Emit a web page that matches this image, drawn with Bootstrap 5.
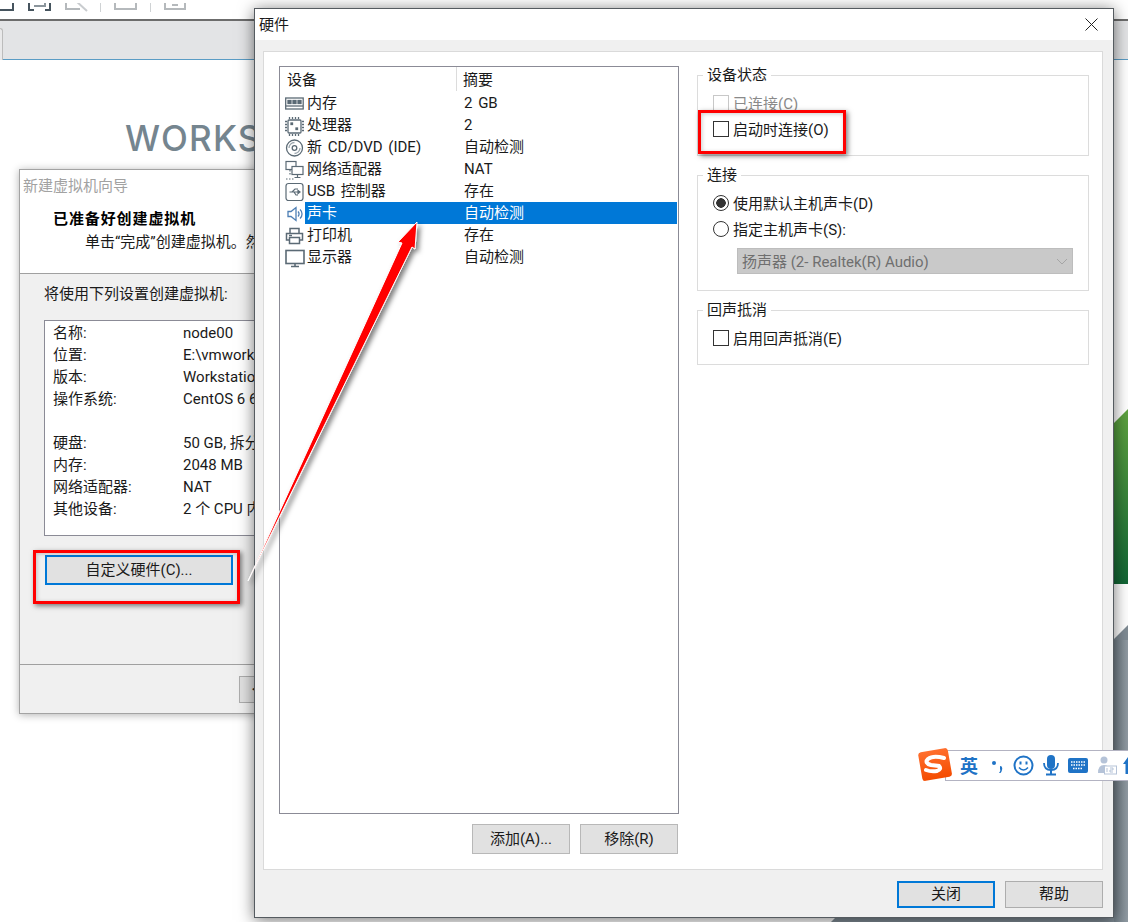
<!DOCTYPE html>
<html lang="zh-CN">
<head>
<meta charset="utf-8">
<title>硬件</title>
<link href="https://cdn.jsdelivr.net/npm/bootstrap@5.3.0/dist/css/bootstrap.min.css" rel="stylesheet">
<style>
html,body{margin:0;padding:0;background:#fff}
body{font-family:Roboto,"Noto Sans CJK SC",sans-serif;font-size:15px;color:#1a1a1a;line-height:22px}
.stage{position:relative;width:1128px;height:922px;overflow:hidden;background:#fff}
.deco{position:absolute;left:0;top:0}
.tool{height:19px}
.tool-sep{height:2px;background:#6c6c6c}
.tabs{height:39px;background:#e3e4e6;border-bottom:1px solid #5a9cc5;padding-top:7px}
.tab-edge{width:3px;height:32px;border:1px solid #bcbcbc;border-left:0;border-bottom:0;border-top-right-radius:4px;background:#e9e9ea}
.brand{font-family:Inter,Roboto,sans-serif;font-weight:500;font-size:35px;line-height:36px;color:#75858f;padding:60px 0 0 125px;letter-spacing:1.200px;white-space:nowrap}
.winwiz{position:absolute;left:19px;top:169px;width:300px;height:545px;background:#f0f0f0;border:1px solid #a3a3a3;box-shadow:0 1px 8px rgba(0,0,0,.3)}
.wiz-head{height:104px;background:#fff;border-bottom:1px solid #a0a0a0}
.wiz-title{height:33px;line-height:33px;padding-left:3px;color:#a2a2a2}
.wiz-bold{font-weight:700;padding:5px 0 0 33px;letter-spacing:.9px;color:#000;white-space:nowrap}
.wiz-sub{padding:1px 0 0 65px;white-space:nowrap}
.wiz-body{height:391px;border-bottom:1px solid #a0a0a0;padding:9px 0 0 24px}
.wiz-box{margin-top:15px;width:270px;height:216px;background:#fff;border:1px solid #8b8b96;padding:1px 0 0 8px}
.wiz-box>div{height:22px;padding-top:1px;line-height:21px}
.wiz-lab{width:130px;flex:none}
.wiz-val{white-space:nowrap}
.wiz-main{margin:19px 0 0 1px;width:188px;height:30px}
.wiz-foot{padding:11px 0 0 219px}
.win-btn{display:block;padding:0;border-radius:0;font-size:15px;line-height:1;background:#e1e1e1;border:1px solid #adadad;color:#1a1a1a;font-family:inherit}
.win-btn:disabled{opacity:1}
.win-focus{border:2px solid #0078d7}
.wiz-back{width:80px;height:27px;white-space:nowrap;text-align:left;padding-left:12px}
.winhw{position:absolute;left:254px;top:8px;width:860px;height:910px;background:#f0f0f0;border:1px solid #555b60;box-shadow:0 2px 15px rgba(0,0,0,.55)}
.hw-title{height:31px;background:#fff;padding-left:4px;line-height:32px}
.hw-x{width:13px;height:13px;margin:9px 15px 0 0}
.hw-body{padding:11px 10px 0 8px}
.panel-w{height:819px;background:#fff;border:1px solid #dadada;padding:14px 0 0 15px;gap:18px}
.left-col{width:400px}
.listbox{height:748px;border:1px solid #8b8b96;background:#fff;word-spacing:2px}
.list-head{height:25px;line-height:26px}
.hd-a{width:177px;padding-left:7px;border-right:1px solid #dcdcdc;height:24px;margin-right:6px}
.list-row{height:22px}
.row-ic{width:25px;flex:none;padding-left:5px}
.row-sel{flex:1 1 auto;margin-right:1px;padding-left:2px}
.row-sel>div{padding-top:1px;line-height:21px}
.row-on{background:#0078d7;color:#fff}
.row-nm{width:157px;flex:none}
.side-row{gap:10px;margin-top:10px;padding-right:1px}
.side-btn{width:98px;height:30px;background:#e1e1e1;border-color:#b8b8b8}
.right-col{width:392px;padding-top:9px;gap:19px}
.grp{position:relative;border:1px solid #dcdcdc;padding:14px 0 0 15px}
.grp-a{height:81px}
.grp-b{height:116px}
.grp-c{height:55px}
.grp-lg{position:absolute;left:5px;top:-12px;background:#fff;padding:0 4px;line-height:22px}
.opt{height:26px;gap:4px}
.opt>span{padding-top:2px;line-height:22px}
.opt .form-check-input{margin:0;width:16px;height:16px;border-radius:0;border:1px solid #333;background-color:#fff;flex:none;opacity:1}
.opt .form-check-input:disabled{border-color:#c8c8c8;opacity:1}
.opt .form-check-input[type=radio]{border-radius:50%}
.opt .form-check-input[type=radio]:checked{background-image:radial-gradient(circle,#333 0 4.500px,#fff 5px);border-color:#333}
.opt-off{color:#8a8a8a}
.fake-select{margin:6px 0 0 24px;width:336px;height:26px;background:#c9c9c9;border:1px solid #bdbdbd;padding:0 4px;color:#6f6f6f;white-space:nowrap}
.fake-select>span{padding-top:2px;line-height:22px}
.foot{gap:10px;padding:11px 0 0 0}
.foot-btn{width:98px;height:27px}
.red-box{position:absolute;border:3px solid #f00;box-shadow:2px 2px 5px rgba(0,0,0,.5),inset 1px 1px 4px rgba(0,0,0,.2)}
.red-a{left:698px;top:110px;width:148px;height:44px}
.red-b{left:33px;top:550px;width:207px;height:54px}
.ime{position:absolute;left:917px;top:747px;width:211px;height:35px}
.ime-bar{position:absolute;left:28px;top:3px;width:190px;height:31px;background:#fff;border:1px solid #b3b3c2;padding-left:14px;gap:0}
.ime-en{font-weight:700;font-size:18px;color:#1f73c6;width:18px;line-height:29px;font-family:"Noto Sans CJK SC",sans-serif}
.ime-logo{position:absolute;left:0;top:0}
.gap-13{margin-left:13px}.gap-10{margin-left:10px}.gap-9{margin-left:9px}.gap-6{margin-left:6px}
</style>
</head>
<body>
<div class="stage">
  <svg class="deco" width="1128" height="922">
    <defs>
      <linearGradient id="gr" x1="0" y1="0" x2="0" y2="1"><stop offset="0" stop-color="#5ea23f"/><stop offset="1" stop-color="#126535"/></linearGradient>
      <linearGradient id="gy" x1="0" y1="0" x2="1" y2="0"><stop offset="0" stop-color="#6f7b84"/><stop offset="1" stop-color="#98a2a9"/></linearGradient>
    </defs>
    <polygon points="1128,409 953,584 1128,584" fill="url(#gr)"/>
    <polygon points="1128,625 800,953 1128,953" fill="#7f8b94"/>
    <rect x="1114" y="640" width="14" height="282" fill="url(#gy)" opacity=".7"/>
  </svg>
  <div class="position-relative">
    <div class="tool">
      <svg width="200" height="19" fill="none" stroke-width="2">
        <path d="M-2 7H13V-2" stroke="#46545e"/>
        <path d="M29-2V7H34M45 7H50V-2" stroke="#46545e"/><path d="M34 3H45V-2" stroke="#8b959c"/>
        <path d="M66-2V6H80" stroke="#b5b9bc"/><path d="M76-2L87 8" stroke="#c9cccf"/>
        <path d="M100.500-2V9" stroke="#cfd2d4" stroke-width="1"/>
        <path d="M115-2V6H136V-2" stroke="#b5b9bc"/>
        <path d="M150.500-2V9" stroke="#cfd2d4" stroke-width="1"/>
        <path d="M165-2V6H185V-2M172 2H178" stroke="#b5b9bc"/>
      </svg>
    </div>
    <div class="tool-sep"></div>
    <div class="tabs"><div class="tab-edge"></div></div>
    <div class="brand">WORKSTATION</div>
  </div>

  <div class="winwiz">
    <div class="wiz-head">
      <div class="wiz-title">新建虚拟机向导</div>
      <div class="wiz-bold">已准备好创建虚拟机</div>
      <div class="wiz-sub">单击“完成”创建虚拟机。然后</div>
    </div>
    <div class="wiz-body">
      <div>将使用下列设置创建虚拟机:</div>
      <div class="wiz-box">
        <div class="d-flex"><div class="wiz-lab">名称:</div><div class="wiz-val">node00</div></div>
        <div class="d-flex"><div class="wiz-lab">位置:</div><div class="wiz-val">E:\vmwork\node00</div></div>
        <div class="d-flex"><div class="wiz-lab">版本:</div><div class="wiz-val">Workstation 14.x</div></div>
        <div class="d-flex"><div class="wiz-lab">操作系统:</div><div class="wiz-val">CentOS 6 64 位</div></div>
        <div class="d-flex"><div class="wiz-lab">&nbsp;</div></div>
        <div class="d-flex"><div class="wiz-lab">硬盘:</div><div class="wiz-val">50 GB, 拆分成多个文件</div></div>
        <div class="d-flex"><div class="wiz-lab">内存:</div><div class="wiz-val">2048 MB</div></div>
        <div class="d-flex"><div class="wiz-lab">网络适配器:</div><div class="wiz-val">NAT</div></div>
        <div class="d-flex"><div class="wiz-lab">其他设备:</div><div class="wiz-val">2 个 CPU 内核</div></div>
      </div>
      <button type="button" class="btn win-btn win-focus wiz-main">自定义硬件(C)...</button>
    </div>
    <div class="wiz-foot"><button type="button" class="btn win-btn wiz-back">&lt; 上一步(B)</button></div>
  </div>

  <div class="winhw">
    <div class="hw-title d-flex justify-content-between">
      <span>硬件</span>
      <svg class="hw-x" viewBox="0 0 13 13" stroke="#222" stroke-width="1"><path d="M.5.500L12.500 12.500M12.500.500L.5 12.500"/></svg>
    </div>
    <div class="hw-body">
      <div class="panel-w d-flex">
        <div class="left-col d-flex flex-column">
          <div class="listbox">
            <div class="list-head d-flex"><div class="hd-a">设备</div><div>摘要</div></div>

            <div class="list-row d-flex">
              <div class="row-ic"><svg width="19" height="22" fill="none" stroke="#5b6a75" stroke-width="1.300"><rect x=".7" y="5" width="17.500" height="11"/><path d="M.7 13H18" /><rect x="3" y="7.500" width="3" height="3" fill="#5b6a75"/><rect x="8" y="7.500" width="3" height="3" fill="#5b6a75"/><rect x="13" y="7.500" width="3" height="3" fill="#5b6a75"/></svg></div>
              <div class="row-sel d-flex"><div class="row-nm">内存</div><div>2 GB</div></div>
            </div>
            <div class="list-row d-flex">
              <div class="row-ic"><svg width="19" height="22" fill="none" stroke="#5b6a75" stroke-width="1.300"><rect x="3" y="5" width="13" height="13" rx="1"/><path d="M4.500 2v2M7.500 2v2M10.500 2v2M13.500 2v2M4.500 19v2M7.500 19v2M10.500 19v2M13.500 19v2M0 6.500h2M0 9.500h2M0 12.500h2M0 15.500h2M17 6.500h2M17 9.500h2M17 12.500h2M17 15.500h2"/><rect x="6" y="8" width="1.500" height="1.500" fill="#5b6a75"/><rect x="11" y="13" width="1.500" height="1.500" fill="#5b6a75"/></svg></div>
              <div class="row-sel d-flex"><div class="row-nm">处理器</div><div>2</div></div>
            </div>
            <div class="list-row d-flex">
              <div class="row-ic"><svg width="19" height="22" fill="none" stroke="#5b6a75" stroke-width="1.300"><circle cx="9.500" cy="11" r="8"/><circle cx="9.500" cy="11" r="2.300"/><path d="M9.500 5.500A5.500 5.500 0 0 0 4 11M15 11a5.500 5.500 0 0 1-5.500 5.500" stroke="#9aa5ad"/></svg></div>
              <div class="row-sel d-flex"><div class="row-nm">新 CD/DVD (IDE)</div><div>自动检测</div></div>
            </div>
            <div class="list-row d-flex">
              <div class="row-ic"><svg width="19" height="22" fill="none" stroke="#5b6a75" stroke-width="1.200"><rect x="1" y="2.500" width="10" height="8" fill="#fff"/><rect x="7" y="7.500" width="11" height="8" fill="#fff"/><path d="M12.500 15.500v3M9.500 18.500h6"/><path d="M5 11v6M1 20h9" stroke-dasharray="1.500 1.500"/></svg></div>
              <div class="row-sel d-flex"><div class="row-nm">网络适配器</div><div>NAT</div></div>
            </div>
            <div class="list-row d-flex">
              <div class="row-ic"><svg width="19" height="22" fill="none" stroke="#5b6a75" stroke-width="1.200"><rect x="1" y="2.500" width="17" height="17" rx="2.500"/><path d="M4.500 11H15M7 11l3-3h3M9 11l2 3h2"/><path d="M15 11l-2-1.500v3z" fill="#5b6a75"/></svg></div>
              <div class="row-sel d-flex"><div class="row-nm">USB 控制器</div><div>存在</div></div>
            </div>
            <div class="list-row d-flex">
              <div class="row-ic"><svg width="19" height="22" fill="#fff" stroke="#4d7fb5" stroke-width="1.300"><path d="M3 8.500H6L11 4.500V17.500L6 13.500H3Z"/><path d="M13 8.500a3.500 3.500 0 0 1 0 5M15 6.500a6 6 0 0 1 0 9" fill="none"/></svg></div>
              <div class="row-sel row-on d-flex"><div class="row-nm">声卡</div><div>自动检测</div></div>
            </div>
            <div class="list-row d-flex">
              <div class="row-ic"><svg width="19" height="22" fill="none" stroke="#5b6a75" stroke-width="1.500"><path d="M5 8V3.500H14V8"/><path d="M4 15H1.500V8.500H17.500V15H15"/><rect x="4.500" y="12.500" width="10" height="6"/><path d="M4 10.500H7" /></svg></div>
              <div class="row-sel d-flex"><div class="row-nm">打印机</div><div>存在</div></div>
            </div>
            <div class="list-row d-flex">
              <div class="row-ic"><svg width="20" height="22" fill="none" stroke="#5b6a75" stroke-width="1.600"><rect x="1" y="3.500" width="18" height="13"/><path d="M6 19.500H14M10 16.500v3"/></svg></div>
              <div class="row-sel d-flex"><div class="row-nm">显示器</div><div>自动检测</div></div>
            </div>
          </div>
          <div class="side-row d-flex justify-content-end">
            <button type="button" class="btn win-btn side-btn">添加(A)...</button>
            <button type="button" class="btn win-btn side-btn">移除(R)</button>
          </div>
        </div>
        <div class="right-col d-flex flex-column">
          <div class="grp grp-a">
            <div class="grp-lg">设备状态</div>
            <label class="opt opt-off d-flex align-items-center"><input class="form-check-input" type="checkbox" disabled><span>已连接(C)</span></label>
            <label class="opt d-flex align-items-center"><input class="form-check-input" type="checkbox"><span>启动时连接(O)</span></label>
          </div>
          <div class="grp grp-b">
            <div class="grp-lg">连接</div>
            <label class="opt d-flex align-items-center"><input class="form-check-input" type="radio" name="snd" checked><span>使用默认主机声卡(D)</span></label>
            <label class="opt d-flex align-items-center"><input class="form-check-input" type="radio" name="snd"><span>指定主机声卡(S):</span></label>
            <div class="fake-select d-flex justify-content-between align-items-center">
              <span>扬声器 (2- Realtek(R) Audio)</span>
              <svg width="12" height="7" fill="none" stroke="#a5a5a5"><path d="M1 1l5 5 5-5"/></svg>
            </div>
          </div>
          <div class="grp grp-c">
            <div class="grp-lg">回声抵消</div>
            <label class="opt d-flex align-items-center"><input class="form-check-input" type="checkbox"><span>启用回声抵消(E)</span></label>
          </div>
        </div>
      </div>
      <div class="foot d-flex justify-content-end">
        <button type="button" class="btn win-btn win-focus foot-btn">关闭</button>
        <button type="button" class="btn win-btn foot-btn">帮助</button>
      </div>
    </div>
  </div>

  <div class="red-box red-a"></div>
  <div class="red-box red-b"></div>

  <svg class="deco" width="1128" height="922">
    <defs><filter id="sh" x="-20%" y="-20%" width="140%" height="140%"><feDropShadow dx="3" dy="3" stdDeviation="2.500" flood-color="#000" flood-opacity=".5"/></filter></defs>
    <polygon points="248,581 402,243 398,242 417,222 415,249 412,247" fill="#f00" stroke="#fff" stroke-width="1" filter="url(#sh)"/>
  </svg>

  <div class="ime">
    <div class="ime-bar d-flex align-items-center">
      <span class="ime-en">英</span>
      <svg class="gap-13" width="12" height="14" fill="#1f73c6"><circle cx="3" cy="4" r="2"/><path d="M9 7q3 0 2 4t-3 3q2-2 1-4z"/></svg>
      <svg class="gap-10" width="21" height="21" fill="none" stroke="#1f73c6" stroke-width="2"><circle cx="10.500" cy="10.500" r="9"/><path d="M6 12.500q4.500 5 9 0" stroke-width="1.500"/><path d="M7.500 6.500v3M13.500 6.500v3"/></svg>
      <svg class="gap-9" width="16" height="21" fill="#1f73c6"><rect x="4" y="0" width="8" height="14" rx="4"/><path d="M1 8q0 7 7 7t7-7" fill="none" stroke="#1f73c6" stroke-width="1.800"/><rect x="7" y="15" width="2" height="4"/><rect x="3" y="18.500" width="10" height="2"/></svg>
      <svg class="gap-9" width="20" height="15"><rect width="20" height="15" rx="2" fill="#1f73c6"/><path d="M3 4h14M3 7h14M5 10.500h10" stroke="#fff" stroke-width="1.500" stroke-dasharray="1.500 1"/></svg>
      <svg class="gap-9" width="20" height="19"><circle cx="7" cy="4" r="3.500" fill="#b5c3d8"/><path d="M1 17q0-8 6-8t5 8z" fill="#b5c3d8"/><rect x="7.500" y="10" width="12" height="8" fill="#fff" stroke="#b5c3d8"/><path d="M10 12v4M13 12h3v2h-3v2h3" stroke="#b5c3d8" fill="none"/></svg>
      <svg class="gap-6" width="10" height="19" fill="#1f73c6"><path d="M5 1L10 8H7.500V18H2.500V8H0Z"/></svg>
    </div>
    <svg class="ime-logo" width="37" height="35">
      <defs><linearGradient id="og" x1="0" y1="0" x2="0" y2="1"><stop offset="0" stop-color="#ff6f2e"/><stop offset="1" stop-color="#f44c00"/></linearGradient></defs>
      <rect x="3" y="3" width="30" height="29" rx="3" transform="rotate(-10 18 17)" fill="url(#og)"/>
      <path d="M27 11Q16 8 11 12Q7 16 14 18L22 19Q25 22 20 24Q14 25 9 23" fill="none" stroke="#fff" stroke-width="4" stroke-linecap="round"/>
    </svg>
  </div>
</div>
<script src="https://cdn.jsdelivr.net/npm/bootstrap@5.3.0/dist/js/bootstrap.bundle.min.js"></script>
</body>
</html>
